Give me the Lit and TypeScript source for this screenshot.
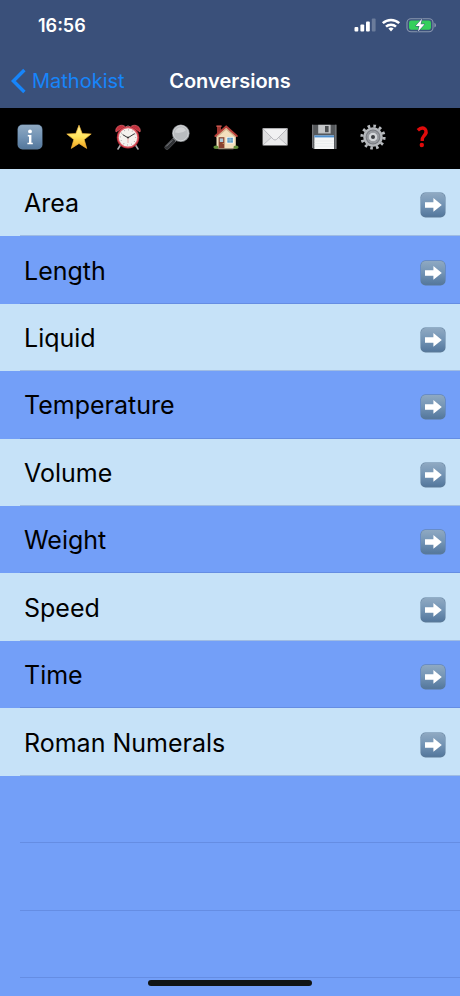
import { LitElement, html, css, svg } from "lit";
import { customElement } from "lit/decorators.js";

const categories = [
  "Area",
  "Length",
  "Liquid",
  "Temperature",
  "Volume",
  "Weight",
  "Speed",
  "Time",
  "Roman Numerals",
];

const spareRows = [0, 1, 2];

const tile = svg`
  <defs>
    <linearGradient id="tile" x1="0" y1="0" x2="0" y2="1">
      <stop offset="0" stop-color="#8fa9c2" />
      <stop offset="0.5" stop-color="#7394b5" />
      <stop offset="1" stop-color="#54779c" />
    </linearGradient>
  </defs>
  <rect x="0.5" y="0.5" width="25" height="25" rx="5" fill="#5c7a98" />
  <rect x="1" y="1" width="24" height="23.6" rx="4.5" fill="url(#tile)" />`;

const tools = [
  {
    label: "Information",
    art: svg`${tile}
      <circle cx="13" cy="7.4" r="1.9" fill="#fff" />
      <path d="M10.8 11H14.4V18.8H15.8V20.2H10.4V18.8H12V12.4H10.8Z" fill="#fff" />`,
  },
  {
    label: "Favourites",
    art: svg`
      <defs>
        <linearGradient id="gold" x1="0" y1="0" x2="0" y2="1">
          <stop offset="0" stop-color="#fff3a0" />
          <stop offset="0.5" stop-color="#ffe45c" />
          <stop offset="1" stop-color="#f2a21c" />
        </linearGradient>
      </defs>
      <path d="M13 1.2L16.2 9.6L25.2 10L18.2 15.6L20.7 24.4L13 19.5L5.3 24.4L7.8 15.6L0.8 10L9.8 9.6Z"
        fill="url(#gold)" stroke="#f0b53a" stroke-width="0.7" stroke-linejoin="round" />`,
  },
  {
    label: "Alarm",
    art: svg`
      <path d="M5.5 21L3 25M20.5 21L23 25" stroke="#a9a9ad" stroke-width="1.6" stroke-linecap="round" />
      <path d="M1 8C-0.6 3.6 5.2-0.8 9.8 2.2ZM25 8C26.6 3.6 20.8-0.8 16.2 2.2Z" fill="#c5303c" stroke="#e7747b" stroke-width="0.6" />
      <path d="M10.5 3Q13 1 15.5 3" stroke="#b9b9bd" fill="none" />
      <circle cx="13" cy="13.4" r="11.2" fill="#b92c38" />
      <circle cx="13" cy="13.4" r="10.4" fill="#dc6069" />
      <circle cx="13" cy="13.4" r="9.2" fill="#f5f2ee" />
      <circle cx="13" cy="13.4" r="7.6" fill="none" stroke="#8d8e91" stroke-width="1.2" stroke-dasharray="0.6 3.38" />
      <path d="M8 10.8L13 13.8L19.3 9.8" fill="none" stroke="#333" stroke-width="1" stroke-linecap="round" />
      <path d="M13 13.6V19" stroke="#d66" stroke-width="0.5" />
      <circle cx="13" cy="13.6" r="1" fill="#333" />`,
  },
  {
    label: "Search",
    art: svg`
      <path d="M11.6 14.6L3 23.4" stroke="#77797d" stroke-width="4.6" stroke-linecap="round" />
      <path d="M9 17.2L3 23.4" stroke="#303235" stroke-width="4.2" stroke-linecap="round" />
      <path d="M8 16.6L2.4 22.2" stroke="#8e9196" stroke-width="0.9" stroke-linecap="round" />
      <circle cx="16.8" cy="9.2" r="8.8" fill="#85888c" />
      <circle cx="16.8" cy="9.2" r="7.6" fill="#b9bcbf" stroke="#e1e3e5" stroke-width="0.8" />
      <path d="M11 8.5A6 6 0 0 1 22 6.2Q18 10 11 8.5Z" fill="#d0d2d4" />`,
  },
  {
    label: "Home",
    art: svg`
      <path d="M4 2H8V9H4Z" fill="#9e3630" />
      <path d="M3.4 1.4H8.6V3H3.4Z" fill="#c6544c" />
      <path d="M3.5 11.5L13.2 3L22.8 11.5V24.6H3.5Z" fill="#f3dfbd" />
      <path d="M13.2 4L22.8 12.4V14L13.2 5.8L3.5 14V12.4Z" fill="#d0b48d" />
      <path d="M2.4 12L13.2 2.4L23.8 12" fill="none" stroke="#b6403a" stroke-width="2" stroke-linecap="round" stroke-linejoin="round" />
      <rect x="5.6" y="13.2" width="5.8" height="11.2" fill="#8a4330" />
      <rect x="6.8" y="14.4" width="3.4" height="3.6" fill="#adc8d6" />
      <circle cx="10.2" cy="19.6" r="0.5" fill="#f1ca68" />
      <rect x="13.6" y="13" width="7" height="6.4" fill="#fff" />
      <rect x="14.3" y="13.7" width="5.6" height="5" fill="#5c9cc4" />
      <path d="M14.3 16H19.9M17.1 13.7V18.7" stroke="#cfe3ee" stroke-width="0.4" />
      <ellipse cx="3" cy="23.2" rx="2.6" ry="1.8" fill="#648f3a" />
      <ellipse cx="23" cy="23.2" rx="2.6" ry="1.8" fill="#648f3a" />
      <path d="M5.4 24.8H20.4" stroke="#b7a88f" stroke-width="0.8" />`,
  },
  {
    label: "Mail",
    art: svg`
      <rect x="0.6" y="4.4" width="25" height="17" rx="0.8" fill="#dededf" />
      <path d="M0.8 21L10 12.2H16L25.4 21Z" fill="#ececed" />
      <path d="M0.8 21.2L9.8 13M25.4 21.2L16.2 13" stroke="#b3b3b6" stroke-width="0.8" />
      <path d="M0.8 4.6H25.4L14.6 15.4Q13 16.7 11.4 15.4Z" fill="#f1f1f2" stroke="#aaaaae" stroke-width="0.8" />`,
  },
  {
    label: "Save",
    art: svg`
      <path d="M1 0.8H25.4V25H2.6L1 23.4Z" fill="#55585b" />
      <path d="M1 0.8H2.2V24.4L1 23.4ZM24.2 0.8H25.4V25H24.2Z" fill="#77797c" />
      <rect x="7.2" y="0.8" width="12.4" height="8.6" fill="#c4c6c8" />
      <rect x="14" y="2" width="3.6" height="6.2" fill="#4b4e50" />
      <path d="M7.2 9.4H19.6" stroke="#8c8e90" stroke-width="0.6" />
      <rect x="3.4" y="11.4" width="19.6" height="13.6" fill="#f5f6f6" />
      <rect x="3.4" y="11.4" width="19.6" height="2" fill="#4d8fce" />
      <path d="M3.4 17H23M3.4 19.6H23M3.4 22.2H23" stroke="#e0e5e8" stroke-width="0.6" />`,
  },
  {
    label: "Settings",
    art: svg`
      <circle cx="13" cy="13" r="11" fill="none" stroke="#b7babe" stroke-width="3.2" stroke-dasharray="2.6 3.159" />
      <circle cx="13" cy="13" r="9.8" fill="#b4b7bb" />
      <circle cx="13" cy="13" r="7.4" fill="#777a80" />
      <circle cx="13" cy="13" r="6.4" fill="#989ba0" />
      <path d="M13 6.6V19.4M6.6 13H19.4M8.5 8.5L17.5 17.5M17.5 8.5L8.5 17.5" stroke="#84878c" stroke-width="0.6" />
      <circle cx="13" cy="13" r="4.3" fill="#d3d6d9" />
      <circle cx="13" cy="13" r="2" fill="#3a3c40" />`,
  },
  {
    label: "Help",
    art: svg`
      <path d="M8.8 6.2Q12.8 2.6 16 5C18.6 8 16.6 10.4 14.6 12.4Q13 14 13.2 17" fill="none" stroke="#e00b0b" stroke-width="3.4" />
      <circle cx="12.8" cy="21" r="2.2" fill="#e00b0b" />`,
  },
];

const icon = (art: unknown) =>
  html`<svg class="icon" viewBox="0 0 26 26" aria-hidden="true">${art}</svg>`;

const arrow = svg`${tile}
  <path d="M5 10.2H13.4V6L21.8 12.9L13.4 19.8V15.8H5Z" fill="#fff" />`;

@customElement("app-root")
export class AppRoot extends LitElement {
  static styles = css`
    :host {
      display: flex;
      flex-direction: column;
      min-height: 100vh;
      background: #739ff8;
      font-family: Inter, "Liberation Sans", sans-serif;
      color: #000;
    }
    button {
      border: 0;
      padding: 0;
      background: none;
      font: inherit;
      color: inherit;
      cursor: pointer;
    }
    .header {
      background: #3a507a;
      color: #fff;
    }
    .status {
      display: flex;
      align-items: center;
      justify-content: space-between;
      height: 50px;
      padding: 0 24px 0 38px;
      font-size: 18px;
      font-weight: 600;
    }
    .signals {
      display: block;
      width: 83px;
      height: 16px;
    }
    .nav {
      display: grid;
      grid-template-columns: 1fr auto 1fr;
      align-items: center;
      height: 58px;
      padding: 8px 10px 4px;
      box-sizing: border-box;
    }
    .back {
      display: flex;
      align-items: center;
      gap: 6px;
      color: #1785fa;
      font-size: 20px;
      text-decoration: none;
    }
    .chevron {
      width: 16px;
      height: 26px;
    }
    .title {
      margin: 0;
      font-size: 20px;
      font-weight: 600;
    }
    .tools {
      display: flex;
      justify-content: space-between;
      padding: 16px 25px 19px 17px;
      background: #000;
    }
    .icon {
      display: block;
      width: 26px;
      height: 26px;
    }
    .list {
      display: grid;
      flex: 1;
      grid-auto-rows: 1fr;
      margin: 0;
      padding: 0;
      list-style: none;
    }
    .row {
      display: flex;
      padding-left: 20px;
    }
    .row.light {
      background: #c6e2f8;
    }
    .line {
      display: flex;
      flex: 1;
      align-items: center;
      border-bottom: 1px solid rgba(70, 100, 180, 0.3);
    }
    .entry {
      justify-content: space-between;
      padding: 2px 14px 0 4px;
      font-size: 25px;
      text-align: left;
    }
    .entry .icon {
      margin-top: 4px;
    }
    .foot {
      display: flex;
      justify-content: center;
      height: 16px;
      padding-top: 2px;
    }
    .handle {
      width: 164px;
      height: 6px;
      border-radius: 3px;
      background: #101414;
    }
  `;

  render() {
    return html`
      <header class="header">
        <div class="status">
          <span>16:56</span>
          <svg class="signals" viewBox="0 0 83 16" role="img" aria-label="Signal, Wi-Fi, battery charging">
            <g fill="#fff">
              <rect x="1.5" y="10" width="3.8" height="4.6" rx="1" />
              <rect x="7.4" y="7.6" width="3.8" height="7" rx="1" />
              <rect x="13" y="4.4" width="3.8" height="10.2" rx="1" />
              <rect x="18.8" y="1.4" width="3.8" height="13.2" rx="1" opacity="0.25" />
            </g>
            <g fill="none" stroke="#fff" stroke-width="2.5">
              <path d="M29.8 6.2A12 12 0 0 1 46.2 6.2" />
              <path d="M33 9.7A7.2 7.2 0 0 1 43 9.7" />
            </g>
            <path d="M35.4 11.6A4 4 0 0 1 40.6 11.6L38 14.4Z" fill="#fff" />
            <rect x="54" y="1.7" width="26" height="13" rx="4" fill="none" stroke="#8996af" stroke-width="1.1" />
            <rect x="56" y="3.6" width="22" height="9.2" rx="2.2" fill="#34cf5c" />
            <path d="M81.4 5.8Q83 6.4 83 8.2T81.4 10.6Z" fill="#8996af" />
            <path d="M69 1.8L62.6 9H66.4L65 14.6L71.6 7.2H67.6Z" fill="#fff" stroke="#3a507a" stroke-width="1" paint-order="stroke" />
          </svg>
        </div>
        <nav class="nav">
          <a class="back" href="#">
            <svg class="chevron" viewBox="0 0 16 26" aria-hidden="true">
              <path d="M14.4 2L3.4 13L14.4 24" fill="none" stroke="#1785fa" stroke-width="3.4" />
            </svg>
            <span>Mathokist</span>
          </a>
          <h1 class="title">Conversions</h1>
        </nav>
      </header>
      <div class="tools">
        ${tools.map((t) => html`<button aria-label=${t.label}>${icon(t.art)}</button>`)}
      </div>
      <ul class="list">
        ${categories.map(
          (name, i) => html`
            <li class="row ${i % 2 === 0 ? "light" : ""}">
              <button class="line entry"><span>${name}</span>${icon(arrow)}</button>
            </li>
          `
        )}
        ${spareRows.map(() => html`<li class="row" aria-hidden="true"><div class="line"></div></li>`)}
      </ul>
      <div class="foot"><div class="handle"></div></div>
    `;
  }
}
